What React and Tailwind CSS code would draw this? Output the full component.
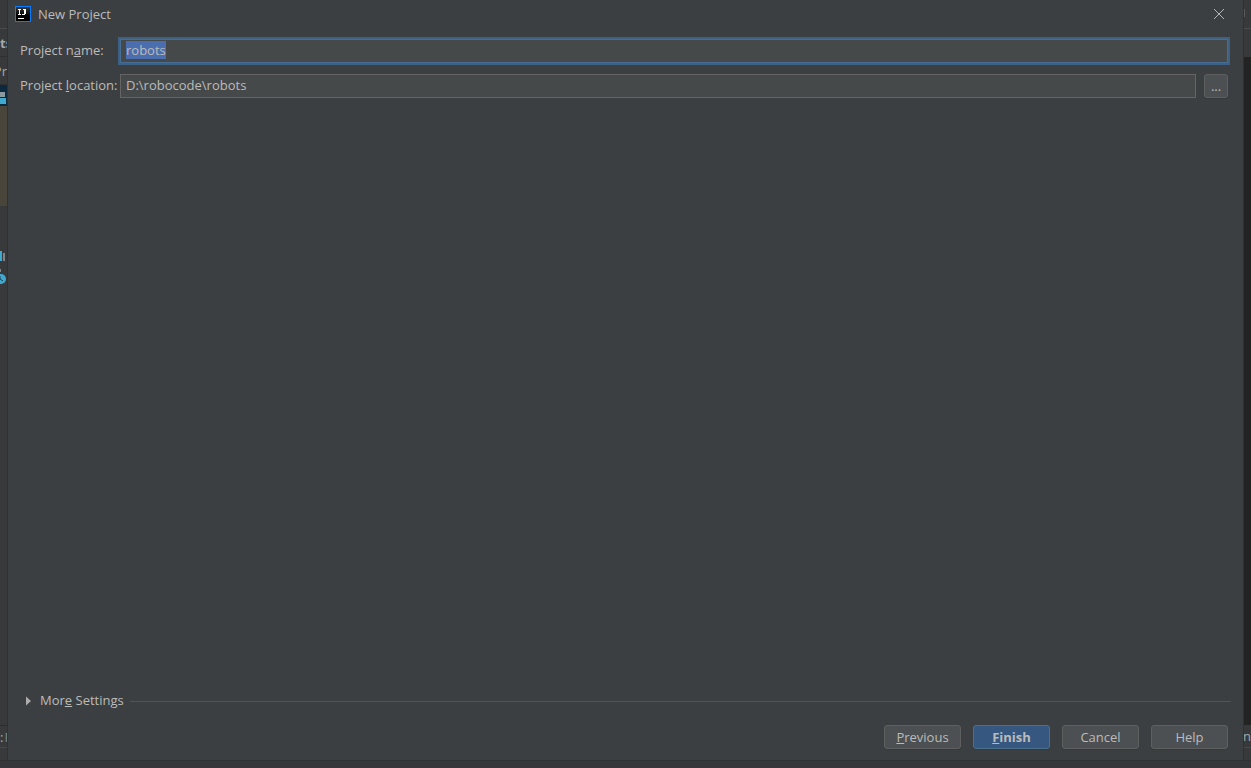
import { useEffect, useRef, useState } from 'react';

const buttonBase =
  'h-6 w-[77px] rounded-[3px] border text-center leading-none shadow-[0_1px_0_#36393a]';

function IdeaLogo() {
  return (
    <svg width="16" height="16" viewBox="0 0 16 16" shapeRendering="crispEdges" aria-hidden="true">
      <defs>
        <linearGradient id="logo-fill" x1="0" y1="0" x2="0" y2="1">
          <stop offset="0" stopColor="#3a3a3a" />
          <stop offset="0.6" stopColor="#000" />
        </linearGradient>
      </defs>
      <rect width="16" height="16" fill="#087cfa" />
      <rect x="1" y="1" width="14" height="14" fill="url(#logo-fill)" />
      <path d="M3 3h3v1H5v4h1v1H3V8h1V4H3zM8 3h3v5h-1v1H7V8h2V4H8z" fill="#fff" />
      <path d="M3 12h6v1H3z" fill="#fff" />
    </svg>
  );
}

// Parts of the main window that stay visible beside the dialog
function LeftEdge() {
  return (
    <aside className="flex w-2 shrink-0 flex-col overflow-hidden border-r border-[#2f3233] bg-[#37393b] whitespace-nowrap text-[#a4a7a9]">
      <div className="h-[29px] shrink-0 border-b border-[#4a4c4e]"></div>
      <div className="flex h-7 shrink-0 items-center border-b border-[#2d2f30] font-bold">ts</div>
      <div className="flex h-7 shrink-0 items-center justify-end border-b border-[#2d2f30]">Pr</div>
      <div className="h-[21px] shrink-0 bg-[#0d293e] pt-[7px]">
        <svg width="7" height="12" shapeRendering="crispEdges" aria-hidden="true">
          <path d="M0 0h5v5H0z" fill="#8a989f" />
          <path d="M0 6h6v6H0z" fill="#3fa9d0" />
        </svg>
      </div>
      <div className="h-[100px] shrink-0 bg-[#49453a]"></div>
      <div className="flex-1 pt-11">
        <svg width="7" height="36" aria-hidden="true">
          <path d="M0 1h2v10H0z" fill="#3fa9d0" />
          <path d="M3 3h2v8H3z" fill="#7f8589" />
          <path d="M0 19h1v3H0z" fill="#7f8589" />
          <circle cx="1" cy="29" r="5" fill="#3fa9d0" />
          <path d="M0 26v3l3 2" fill="none" stroke="#24404c" />
        </svg>
      </div>
      <div className="flex h-[23px] shrink-0 items-center gap-px border-y border-t-[#2b2d2e] border-b-[#47494b]">
        <span>:</span>
        <span className="text-[#6d8c9c]">F</span>
      </div>
      <div className="h-3 shrink-0"></div>
    </aside>
  );
}

function RightEdge() {
  return (
    <aside className="flex w-2 shrink-0 flex-col overflow-hidden border-l border-[#2f3233] bg-[#37393b] whitespace-nowrap text-[#a4a7a9]">
      <div className="h-[29px] shrink-0 border-b border-[#4a4c4e] pt-[9px]">
        <div className="h-2 w-px bg-[#595b5d]"></div>
      </div>
      <div className="h-7 shrink-0"></div>
      <div className="flex-1 bg-[#232323]"></div>
      <div className="flex h-[23px] shrink-0 items-center justify-end border-b border-[#47494b]">en</div>
      <div className="h-3 shrink-0"></div>
    </aside>
  );
}

export default function App() {
  const [name, setName] = useState('robots');
  const [location, setLocation] = useState('D:\\robocode\\robots');
  const nameRef = useRef(null);

  useEffect(() => {
    nameRef.current.focus();
    nameRef.current.select();
  }, []);

  return (
    <div className="flex h-screen flex-col bg-[#35373a] font-['Open_Sans','Noto_Sans',sans-serif] text-[13px] leading-4 text-[#bbbbbb]">
      <div className="flex min-h-0 flex-1">
        <LeftEdge />

        <main className="flex min-w-0 flex-1 flex-col bg-[#3c3f41]">
          {/* Title bar */}
          <header className="flex h-7 items-center gap-[7px] pr-[18px] pl-[7px]">
            <IdeaLogo />
            <h1 className="flex-1">New Project</h1>
            <button type="button" aria-label="Close">
              <svg width="12" height="12" viewBox="0 0 12 12" stroke="#b4b6b7" fill="none" aria-hidden="true">
                <path d="M1 1l10 10M11 1L1 11" />
              </svg>
            </button>
          </header>

          <form className="flex flex-1 flex-col pr-[15px] pl-3" onSubmit={(e) => e.preventDefault()}>
            <div className="grid grid-cols-[100px_1fr] items-center gap-y-[11px] pt-[11px]">
              <label htmlFor="project-name" className="pb-0.5 whitespace-nowrap">
                Project n<u>a</u>me:
              </label>
              <input
                id="project-name"
                ref={nameRef}
                value={name}
                onChange={(e) => setName(e.target.value)}
                className="h-6 w-full border border-[#466d94] bg-[#45494a] px-[5px] pb-0.5 shadow-[0_0_0_2px_#3d6185] outline-none selection:bg-[#4b6eaf] selection:text-[#bbbbbb]"
              />

              <label htmlFor="project-location" className="pb-0.5 whitespace-nowrap">
                Project <u>l</u>ocation:
              </label>
              <div className="flex gap-2">
                <input
                  id="project-location"
                  value={location}
                  onChange={(e) => setLocation(e.target.value)}
                  className="h-6 min-w-0 flex-1 border border-[#646464] bg-[#45494a] px-[5px] pb-0.5 outline-none"
                />
                <button
                  type="button"
                  aria-label="Browse"
                  className="h-6 w-6 rounded-[3px] border border-[#5e6060] bg-[#4c5052] leading-none shadow-[0_1px_0_#36393a]"
                >
                  ...
                </button>
              </div>
            </div>

            {/* Collapsed section */}
            <div className="mt-auto -mr-[3px] flex items-center gap-[6px]">
              <button type="button" aria-expanded="false" className="flex items-center gap-2 pl-[5px]">
                <svg width="7" height="10" viewBox="0 0 7 10" aria-hidden="true">
                  <path d="M1 0.500L6 5L1 9.500z" fill="#adadad" />
                </svg>
                <span className="pb-0.5">
                  Mor<u>e</u> Settings
                </span>
              </button>
              <div className="h-px flex-1 bg-[#515355]"></div>
            </div>

            <div className="mt-[15px] mb-[11px] flex justify-end gap-3">
              <button type="button" className={`${buttonBase} border-[#5e6060] bg-[#4c5052]`}>
                <u>P</u>revious
              </button>
              <button type="submit" className={`${buttonBase} border-[#4c708c] bg-[#365880] font-bold`}>
                <u>F</u>inish
              </button>
              <button type="button" className={`${buttonBase} border-[#5e6060] bg-[#4c5052]`}>
                Cancel
              </button>
              <button type="button" className={`${buttonBase} border-[#5e6060] bg-[#4c5052]`}>
                Help
              </button>
            </div>
          </form>
        </main>

        <RightEdge />
      </div>
      <div className="h-2 border-t border-[#2f3233]"></div>
    </div>
  );
}
